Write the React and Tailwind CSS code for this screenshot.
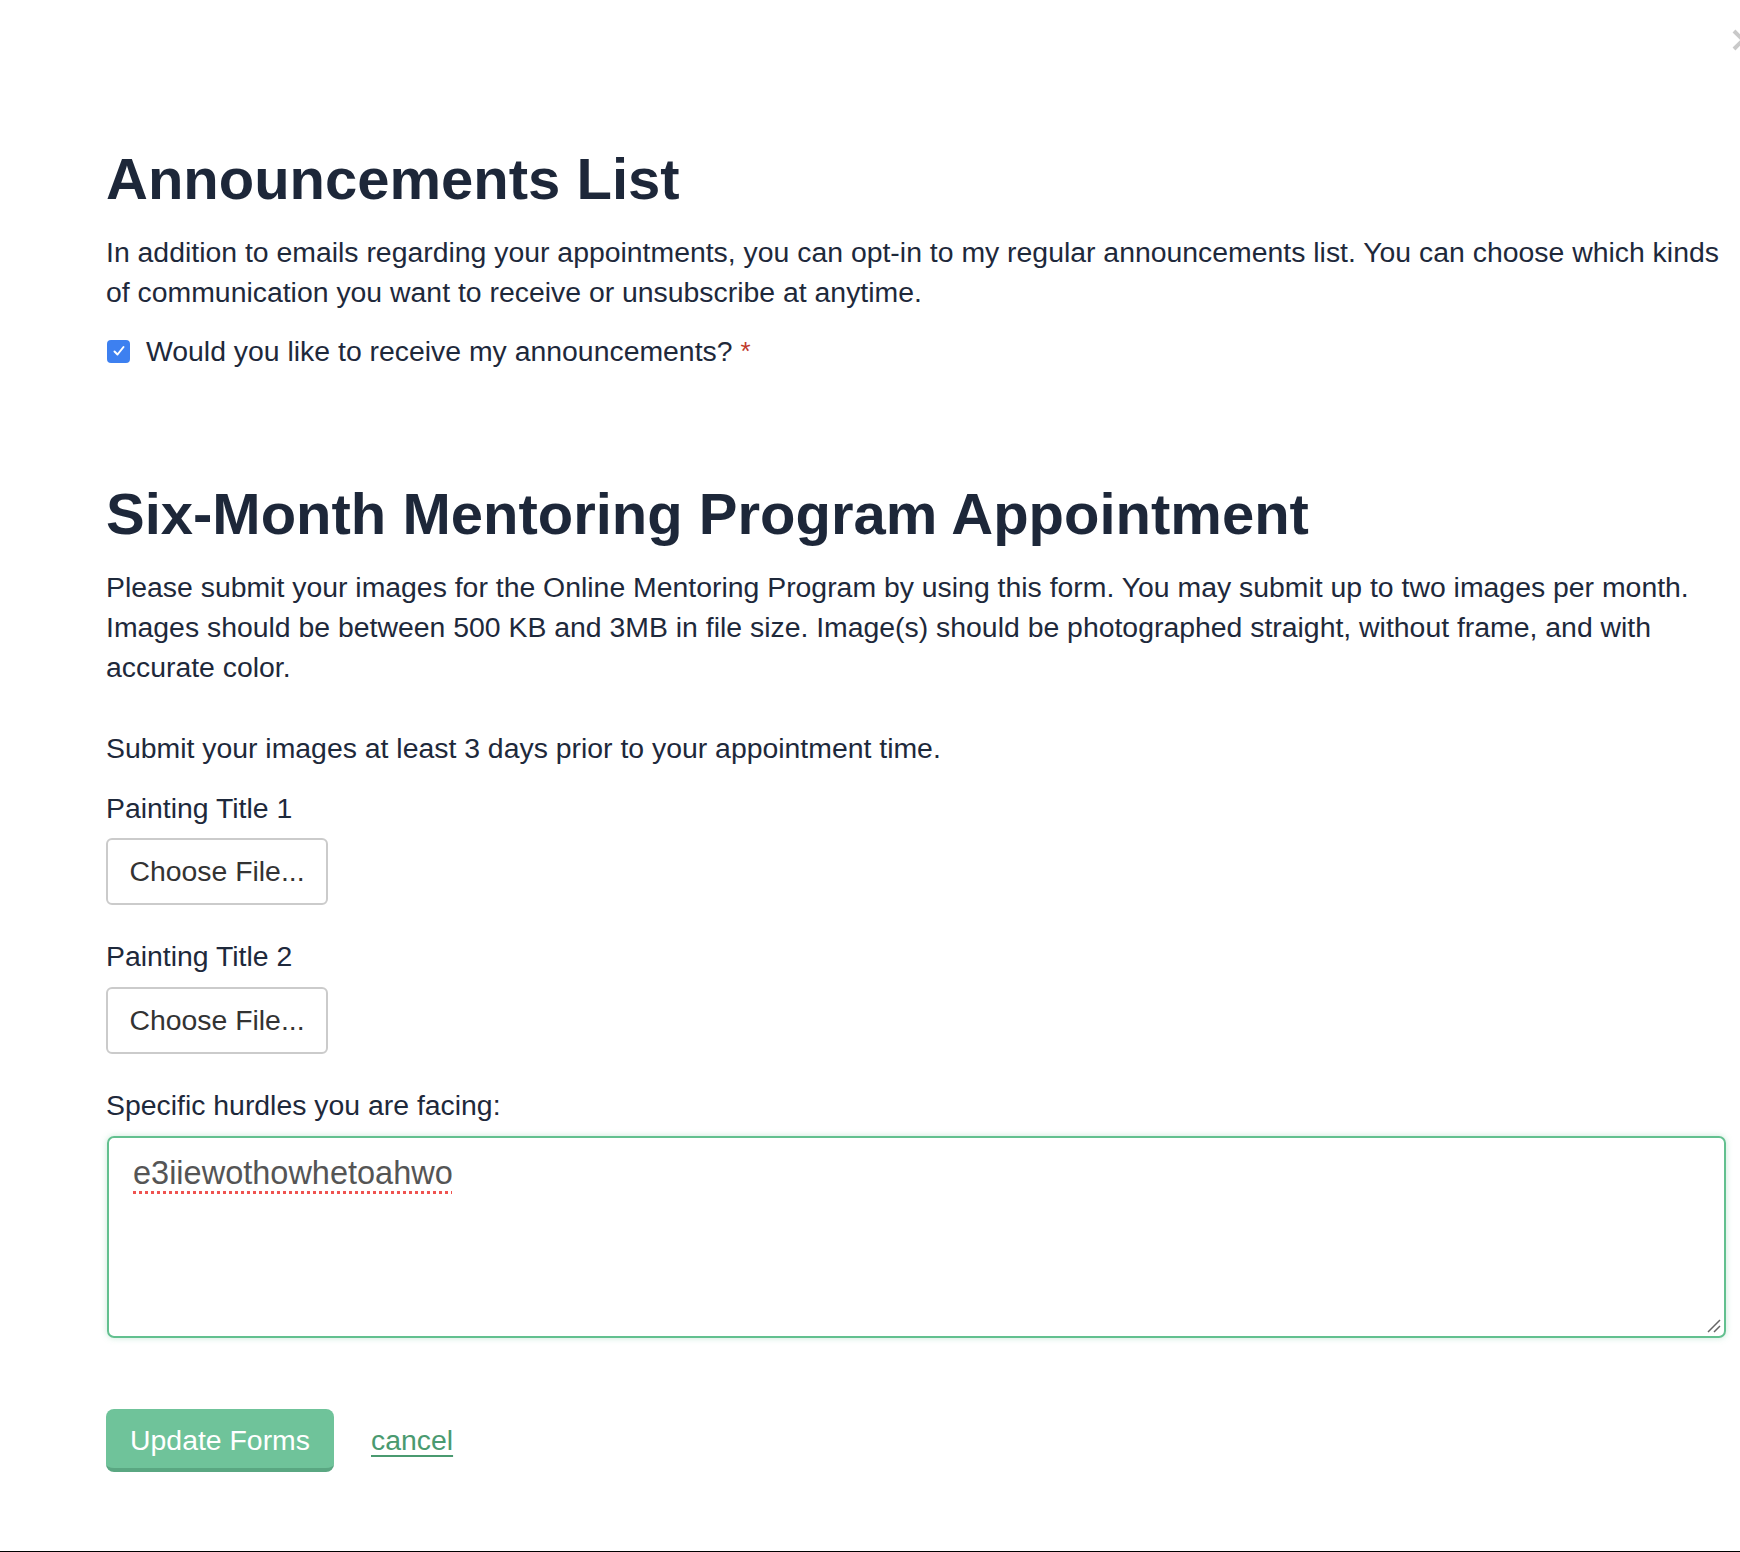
import React from "react";

export default function App() {
  const font = { fontFamily: '"Liberation Sans", Arial, Helvetica, sans-serif' };
  return (
    <div
      className="relative w-[1740px] h-[1552px] overflow-hidden bg-white border-b border-black text-[#1e293b]"
      style={font}
    >
      {/* close button (partly off the right edge) */}
      <div className="absolute left-[1731px] top-[28px]">
        <svg width="24" height="24" viewBox="0 0 24 24">
          <path d="M3 3 L21 21 M21 3 L3 21" stroke="#c9c9c9" strokeWidth="4" strokeLinecap="butt" />
        </svg>
      </div>

      <div className="flex flex-col pl-[106px] pr-[14px] pt-[144px]">
        <h1 className="text-[58px] leading-[70px] font-bold text-[#1d2739]">Announcements List</h1>
        <p className="mt-[18px] text-[28.4px] leading-[40px]">
          In addition to emails regarding your appointments, you can opt-in to my regular announcements list. You can choose which kinds of communication you want to receive or unsubscribe at anytime.
        </p>
        <div className="mt-[19px] flex items-center text-[28.4px] leading-[40px]">
          <span className="ml-[1px] flex h-[23px] w-[23px] items-center justify-center rounded-[4px] bg-[#3d80f0]">
            <svg width="14" height="14" viewBox="0 0 14 14">
              <path d="M2.5 7.5 L5.5 10.5 L11.5 3" fill="none" stroke="white" strokeWidth="2" strokeLinecap="round" strokeLinejoin="round" />
            </svg>
          </span>
          <span className="ml-[16px]">Would you like to receive my announcements?</span>
          <span className="ml-[8px] text-[#c0392b] text-[26px]">*</span>
        </div>

        <h1 className="mt-[108px] text-[58px] leading-[70px] font-bold text-[#1d2739]">Six-Month Mentoring Program Appointment</h1>
        <p className="mt-[18px] text-[28.4px] leading-[40px]">
          Please submit your images for the Online Mentoring Program by using this form. You may submit up to two images per month. Images should be between 500 KB and 3MB in file size. Image(s) should be photographed straight, without frame, and with accurate color.
        </p>
        <p className="mt-[41px] text-[28.4px] leading-[40px]">
          Submit your images at least 3 days prior to your appointment time.
        </p>

        <label className="mt-[20px] text-[28.4px] leading-[40px]">Painting Title 1</label>
        <div className="mt-[10px] flex h-[67px] w-[222px] items-center justify-center rounded-[6px] border-2 border-[#cbcbcb] text-[28.4px] text-[#333333]">
          Choose File...
        </div>

        <label className="mt-[31px] text-[28.4px] leading-[40px]">Painting Title 2</label>
        <div className="mt-[11px] flex h-[67px] w-[222px] items-center justify-center rounded-[6px] border-2 border-[#cbcbcb] text-[28.4px] text-[#333333]">
          Choose File...
        </div>

        <label className="mt-[31px] text-[28.4px] leading-[40px]">Specific hurdles you are facing:</label>
        <div className="relative mt-[11px] ml-[1px] h-[202px] rounded-[7px] border-2 border-[#62c08f] pl-[24px] pt-[15px] text-[32.5px] leading-[40px] text-[#555555] shadow-[0_0_6px_rgba(98,192,143,0.35)]">
          <span className="underline decoration-dotted decoration-[#ef5350] decoration-[3px] underline-offset-[7px]">e3iiewothowhetoahwo</span>
          <svg className="absolute right-[3px] bottom-[3px]" width="14" height="14" viewBox="0 0 14 14">
            <path d="M13 1 L1 13 M13 7 L7 13" stroke="#666" strokeWidth="1.5" />
          </svg>
        </div>

        <div className="mt-[71px] flex items-center">
          <div className="flex h-[63px] w-[228px] items-center justify-center rounded-[8px] border-b-4 border-[#5aa782] bg-[#6fc39a] pt-[3px] text-[28.4px] text-white">
            Update Forms
          </div>
          <a className="ml-[37px] text-[28.4px] text-[#4a9a70] underline underline-offset-[5px]" href="#">cancel</a>
        </div>
      </div>
    </div>
  );
}
